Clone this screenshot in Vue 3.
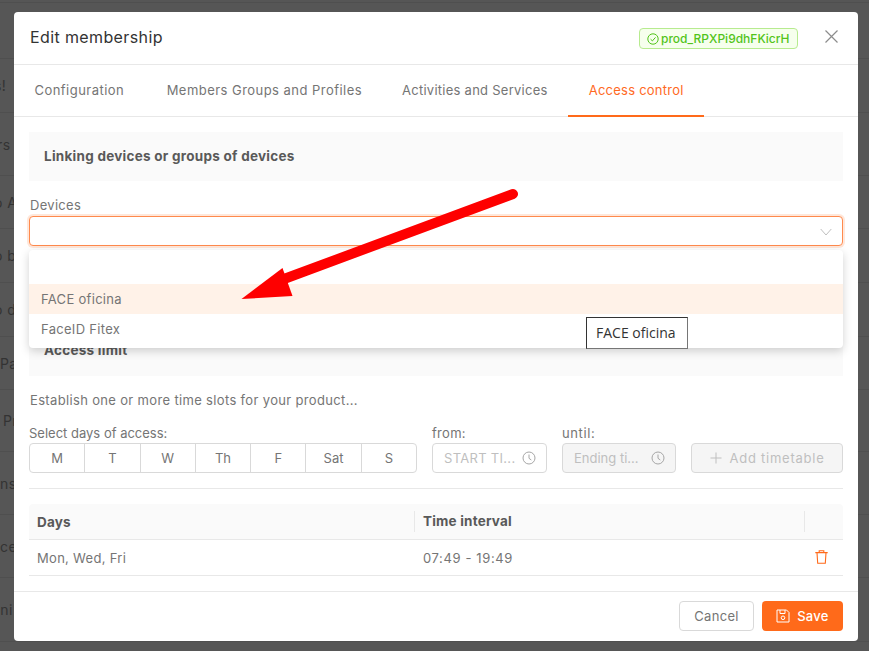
<script setup>
const bgRows = [
  { h: 3, t: '', x: 0 },
  { h: 56, t: '', x: 0 },
  { h: 54, t: 's!', x: -6 },
  { h: 63, t: 'rs', x: -3 },
  { h: 53, t: 'o A', x: -6 },
  { h: 54, t: 'o b', x: -6 },
  { h: 54, t: 'o d', x: -6 },
  { h: 53, t: 'Pa', x: 0 },
  { h: 62, t: 'Pr', x: 3 },
  { h: 63, t: 'ns', x: 0 },
  { h: 63, t: 'ce', x: 0 },
  { h: 64, t: 'ani', x: -8 }
]
const days = ['M', 'T', 'W', 'Th', 'F', 'Sat', 'S']
</script>

<template>
  <div class="page">
    <div class="backdrop">
      <div v-for="(r, i) in bgRows" :key="i" class="bg-row" :style="{ height: r.h + 'px' }">
        <span :style="{ marginLeft: r.x + 'px' }">{{ r.t }}</span>
      </div>
    </div>

    <div class="modal">
      <header class="head">
        <h2 class="title">Edit membership</h2>
        <span class="badge">
          <svg class="ic-check" viewBox="0 0 12 12" width="12" height="12" fill="none" stroke="currentColor">
            <circle cx="6" cy="6" r="5.2" />
            <path d="M3.6 6.2 5.4 7.9 8.5 4.4" />
          </svg>
          prod_RPXPi9dhFKicrH
        </span>
        <svg class="close" viewBox="0 0 13 13" width="13" height="13" fill="none" stroke="currentColor" stroke-width="1.2">
          <path d="M.5.5 12.500 12.500M12.500.5.5 12.500" />
        </svg>
      </header>

      <nav class="tabs">
        <span class="tab t1">Configuration</span>
        <span class="tab t2">Members Groups and Profiles</span>
        <span class="tab t3">Activities and Services</span>
        <span class="tab active">Access control</span>
      </nav>

      <div class="body">
        <div class="section first">Linking devices or groups of devices</div>

        <label class="lbl devices">Devices</label>
        <div class="select-wrap">
          <div class="select">
            <svg class="chev" viewBox="0 0 12 8" width="12" height="8" fill="none" stroke="currentColor">
              <path d="M.7 1 6 7 11.300 1" />
            </svg>
          </div>
          <div class="dropdown">
            <div class="opt empty"></div>
            <div class="opt hot">FACE oficina</div>
            <div class="opt">FaceID Fitex</div>
          </div>
          <div class="tip">FACE oficina</div>
        </div>

        <div class="section second">Access limit</div>

        <p class="hint">Establish one or more time slots for your product...</p>

        <div class="slots">
          <div class="f-days">
            <label class="lbl">Select days of access:</label>
            <div class="days">
              <span v-for="d in days" :key="d" class="day">{{ d }}</span>
            </div>
          </div>
          <div class="f-time">
            <label class="lbl">from:</label>
            <div class="time">
              <span class="ph">START TI...</span>
              <svg viewBox="0 0 14 14" width="14" height="14" fill="none" stroke="currentColor">
                <circle cx="7" cy="7" r="6" /><path d="M7 3.500V7.300L9.300 9" />
              </svg>
            </div>
          </div>
          <div class="f-time">
            <label class="lbl">until:</label>
            <div class="time off">
              <span class="ph">Ending ti...</span>
              <svg viewBox="0 0 14 14" width="14" height="14" fill="none" stroke="currentColor">
                <circle cx="7" cy="7" r="6" /><path d="M7 3.500V7.300L9.300 9" />
              </svg>
            </div>
          </div>
          <button class="add" disabled>
            <svg viewBox="0 0 12 12" width="12" height="12" fill="none" stroke="currentColor"><path d="M6 .5v11M.5 6h11" /></svg>
            Add timetable
          </button>
        </div>

        <div class="rule"></div>

        <div class="table">
          <div class="t-row t-head">
            <span class="c1">Days</span>
            <span class="c2 sep">Time interval</span>
            <span class="c3 sep"></span>
          </div>
          <div class="t-row t-item">
            <span class="c1">Mon, Wed, Fri</span>
            <span class="c2">07:49 - 19:49</span>
            <span class="c3">
              <svg class="trash" viewBox="0 0 13 14" width="13" height="14" fill="none" stroke="currentColor" stroke-width="1.1">
                <path d="M.3 2.600h12.400M4.200 2.600V.7h4.600v1.900M2 2.600l.7 10.700h7.600L11 2.600" />
              </svg>
            </span>
          </div>
        </div>
      </div>

      <footer class="foot">
        <button class="btn cancel">Cancel</button>
        <button class="btn save">
          <svg viewBox="0 0 14 14" width="14" height="14" fill="none" stroke="currentColor">
            <path d="M1 1h9.500L13 3.500V13H1zM4 1v3.500h5V1" /><circle cx="7" cy="8.800" r="1.800" />
          </svg>
          Save
        </button>
      </footer>

      <svg class="arrow" viewBox="0 0 844 629" width="844" height="629">
        <path d="M499 182 270 267" fill="none" stroke="#fe0000" stroke-width="10" stroke-linecap="round" />
        <path d="M227.500 287 268.500 256 278.500 284Z" fill="#fe0000" />
      </svg>
    </div>
  </div>
</template>

<style>
html, body { margin: 0; padding: 0; background: #555; }
</style>

<style scoped>
.page {
  position: relative;
  width: 869px;
  height: 651px;
  overflow: hidden;
  background: #565656;
  font-family: Inter, "Liberation Sans", sans-serif;
  font-size: 13px;
  color: #737373;
}
.backdrop { display: flex; flex-direction: column; }
.bg-row {
  box-sizing: border-box;
  display: flex;
  align-items: center;
  border-bottom: 1px solid #4f4f4f;
  color: #333;
  font-size: 14px;
  letter-spacing: .4px;
  white-space: pre;
  overflow: hidden;
}
.modal {
  position: absolute;
  left: 14px;
  top: 12px;
  width: 844px;
  height: 629px;
  display: flex;
  flex-direction: column;
  background: #fff;
  border-radius: 4px;
}
.head {
  box-sizing: border-box;
  height: 53px;
  flex: none;
  display: flex;
  align-items: center;
  padding: 0 20px 3px 16px;
  border-bottom: 1px solid #e8e8e8;
}
.title {
  flex: 1;
  margin: 0;
  font-size: 16px;
  font-weight: 400;
  letter-spacing: .38px;
  color: #333;
}
.badge {
  box-sizing: border-box;
  display: flex;
  align-items: center;
  gap: 2px;
  width: 159px;
  height: 21px;
  padding: 0 7px;
  margin-top: 4px;
  margin-right: 27px;
  border: 1px solid #b7eb8f;
  border-radius: 4px;
  background: #f6ffed;
  color: #52c41a;
  font-size: 12px;
  font-weight: 500;
  white-space: nowrap;
}
.ic-check { flex: none; }
.close { color: #8c8c8c; }
.tabs {
  box-sizing: border-box;
  height: 52px;
  flex: none;
  display: flex;
  border-bottom: 1px solid #e8e8e8;
}
.tab {
  box-sizing: border-box;
  height: 52px;
  padding: 0 20.500px;
  line-height: 50px;
  color: #757575;
  font-size: 13px;
  letter-spacing: .46px;
  white-space: nowrap;
}
.tab.t1 { padding-right: 22px; }
.tab.t2 { padding-right: 19.500px; }
.tab.t3 { letter-spacing: .26px; }
.tab.active {
  color: #ff6a1f;
  letter-spacing: .24px;
  border-bottom: 2px solid #ff6a1a;
}
.body {
  flex: 1;
  min-height: 0;
  padding: 15px 15px 0;
}
.section {
  box-sizing: border-box;
  height: 49px;
  padding-left: 15px;
  line-height: 49px;
  background: #fafafa;
  font-weight: 700;
  color: #595959;
  font-size: 13.500px;
  letter-spacing: .26px;
}
.section.second { height: 50px; margin-top: 110px; }
.lbl {
  display: block;
  color: #757575;
  font-size: 13px;
  letter-spacing: .3px;
  line-height: 16px;
}
.devices { margin-top: 16px; margin-bottom: 3px; padding-left: 1px; }
.select-wrap { position: relative; height: 0; }
.select {
  box-sizing: border-box;
  height: 30px;
  border: 1px solid #ff8a4d;
  border-radius: 4px;
  box-shadow: 0 0 0 2px rgba(255, 106, 26, .16);
  background: #fff;
  position: relative;
}
.chev {
  position: absolute;
  right: 10px;
  top: 11px;
  color: #bfbfbf;
}
.dropdown {
  position: absolute;
  z-index: 2;
  top: 34px;
  left: 0;
  right: 0;
  box-sizing: border-box;
  height: 98px;
  padding-bottom: 4px;
  background: #fff;
  border-radius: 4px;
  box-shadow: 0 3px 10px rgba(0, 0, 0, .18);
}
.opt {
  height: 30px;
  padding-left: 12px;
  line-height: 30px;
  color: #757575;
  font-size: 13px;
  letter-spacing: .3px;
}
.opt.empty { height: 34px; }
.opt.hot { background: #fff2e8; }
.tip {
  position: absolute;
  z-index: 3;
  top: 101px;
  left: 557px;
  box-sizing: border-box;
  width: 102px;
  height: 32px;
  padding-left: 9px;
  line-height: 30px;
  background: #fff;
  border: 1px solid #333;
  border-right-color: #767676;
  border-bottom-color: #767676;
  font-family: "Open Sans", sans-serif;
  font-size: 14px;
  color: #333;
  white-space: nowrap;
}
.hint {
  margin: 16px 0 0 1px;
  color: #757575;
  font-size: 13px;
  letter-spacing: .34px;
  line-height: 16px;
}
.slots {
  display: flex;
  align-items: flex-end;
  margin-top: 17px;
}
.f-days { width: 388px; margin-right: 15px; }
.f-days .lbl { letter-spacing: 0; }
.days {
  box-sizing: border-box;
  display: flex;
  height: 30px;
  margin-top: 2px;
  border: 1px solid #d9d9d9;
  border-radius: 4px;
}
.day {
  flex: 1;
  text-align: center;
  line-height: 28px;
  color: #757575;
  border-left: 1px solid #d9d9d9;
}
.day:first-child { border-left: 0; }
.f-time { width: 115px; margin-right: 15px; }
.f-time:nth-child(3) { width: 114px; }
.f-time:nth-child(3) .lbl { letter-spacing: .6px; }
.time {
  box-sizing: border-box;
  display: flex;
  align-items: center;
  justify-content: space-between;
  height: 30px;
  margin-top: 2px;
  padding: 0 10px 0 11px;
  border: 1px solid #d9d9d9;
  border-radius: 4px;
  color: #a6a6a6;
}
.ph { color: #bfbfbf; letter-spacing: .3px; white-space: nowrap; }
.time.off .ph { letter-spacing: 0; }
.time.off { background: #f5f5f5; }
.add {
  box-sizing: border-box;
  display: flex;
  align-items: center;
  justify-content: center;
  gap: 8px;
  width: 152px;
  height: 30px;
  padding: 0;
  border: 1px solid #d9d9d9;
  border-radius: 4px;
  background: #f5f5f5;
  color: #bfbfbf;
  font-family: inherit;
  font-size: 13px;
  letter-spacing: .75px;
}
.rule { height: 1px; margin-top: 15px; background: #e8e8e8; }
.table { margin-top: 15px; }
.t-row {
  box-sizing: border-box;
  display: flex;
  align-items: center;
  border-bottom: 1px solid #e8e8e8;
}
.t-head {
  height: 36px;
  background: #fafafa;
  border-radius: 4px 4px 0 0;
  font-weight: 700;
  font-size: 13.500px;
  letter-spacing: .2px;
  color: #595959;
}
.t-item { height: 36px; color: #757575; letter-spacing: .3px; }
.t-item .c2 { letter-spacing: .62px; }
.c1 { box-sizing: border-box; width: 385px; padding-left: 8px; }
.c2 { box-sizing: border-box; width: 390px; padding-left: 9px; }
.c3 { flex: 1; display: flex; justify-content: flex-end; padding-right: 15px; align-self: center; }
.t-item .c3 { padding-bottom: 2px; }
.sep { border-left: 1px solid #e8e8e8; line-height: 21px; min-height: 21px; }
.c2.sep { padding-left: 8px; }
.trash { color: #ff6a1a; }
.foot {
  box-sizing: border-box;
  height: 50px;
  flex: none;
  display: flex;
  justify-content: flex-end;
  align-items: center;
  gap: 8px;
  padding: 0 15px 2px;
  border-top: 1px solid #e8e8e8;
}
.btn {
  box-sizing: border-box;
  height: 30px;
  padding: 0;
  border-radius: 4px;
  font-family: inherit;
  font-size: 13px;
  letter-spacing: .3px;
}
.cancel { width: 75px; background: #fff; border: 1px solid #d9d9d9; color: #757575; }
.save {
  display: flex;
  align-items: center;
  justify-content: center;
  gap: 7px;
  width: 81px;
  border: 0;
  background: #ff6a1a;
  color: #fff;
  font-weight: 500;
}
.arrow {
  position: absolute;
  left: 0;
  top: 0;
  z-index: 4;
  pointer-events: none;
}
</style>
